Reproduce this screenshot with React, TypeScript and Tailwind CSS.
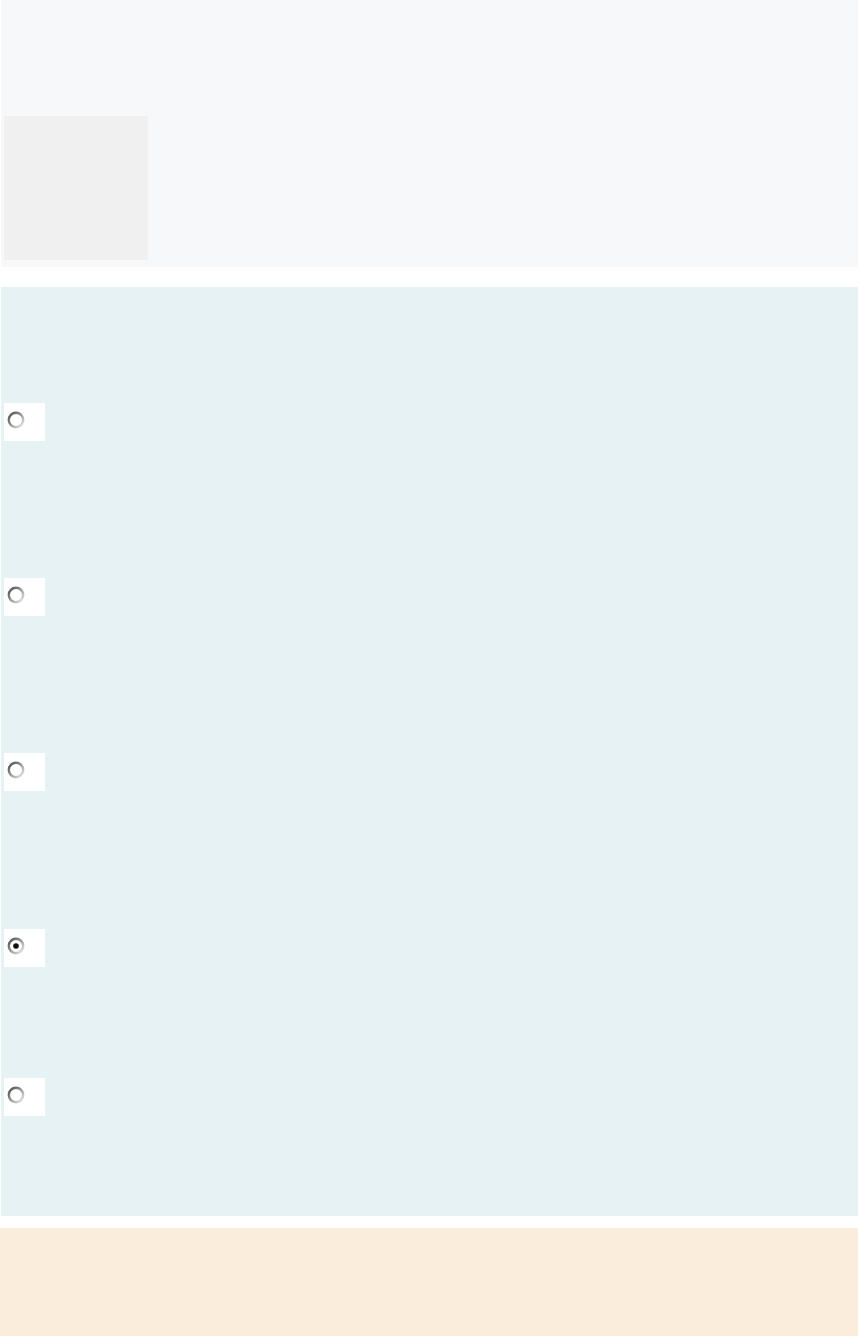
import React from "react";

const options = [
  { top: "mt-[116px]", checked: false },
  { top: "mt-[137px]", checked: false },
  { top: "mt-[137px]", checked: false },
  { top: "mt-[138px]", checked: true },
  { top: "mt-[111px]", checked: false },
];

function Radio({ checked }: { checked: boolean }) {
  return (
    <svg width="18" height="18" viewBox="0 0 18 18" className="block">
      <defs>
        <linearGradient id="ring" x1="0" y1="0" x2="1" y2="1">
          <stop offset="0" stopColor="#4a4a4a" />
          <stop offset="0.5" stopColor="#9a9a9a" />
          <stop offset="1" stopColor="#eeeeee" />
        </linearGradient>
      </defs>
      <circle cx="9" cy="9" r="7.2" fill="#ffffff" stroke="url(#ring)" strokeWidth="2.4" />
      {checked ? <circle cx="9" cy="9" r="2.8" fill="#111111" /> : null}
    </svg>
  );
}

export default function App() {
  return (
    <div className="min-h-[1336px] w-[859px] bg-white">
      <div className="ml-[1px] h-[267px] w-[857px] bg-[#f7f8fa] pl-[3px] pt-[116px]">
        <div className="h-[144px] w-[144px] bg-[#f0f0f0]" />
      </div>

      <div className="mt-[20px] ml-[1px] flex h-[929px] w-[857px] flex-col bg-[#e6f2f4] pl-[3px]">
        {options.map((o, i) => (
          <div
            key={i}
            className={`${o.top} flex h-[38px] w-[41px] items-start bg-white pl-[3px] pt-[8px]`}
          >
            <Radio checked={o.checked} />
          </div>
        ))}
      </div>

      <div className="mt-[12px] h-[108px] w-[858px] bg-[#fbeddc]" />
    </div>
  );
}
